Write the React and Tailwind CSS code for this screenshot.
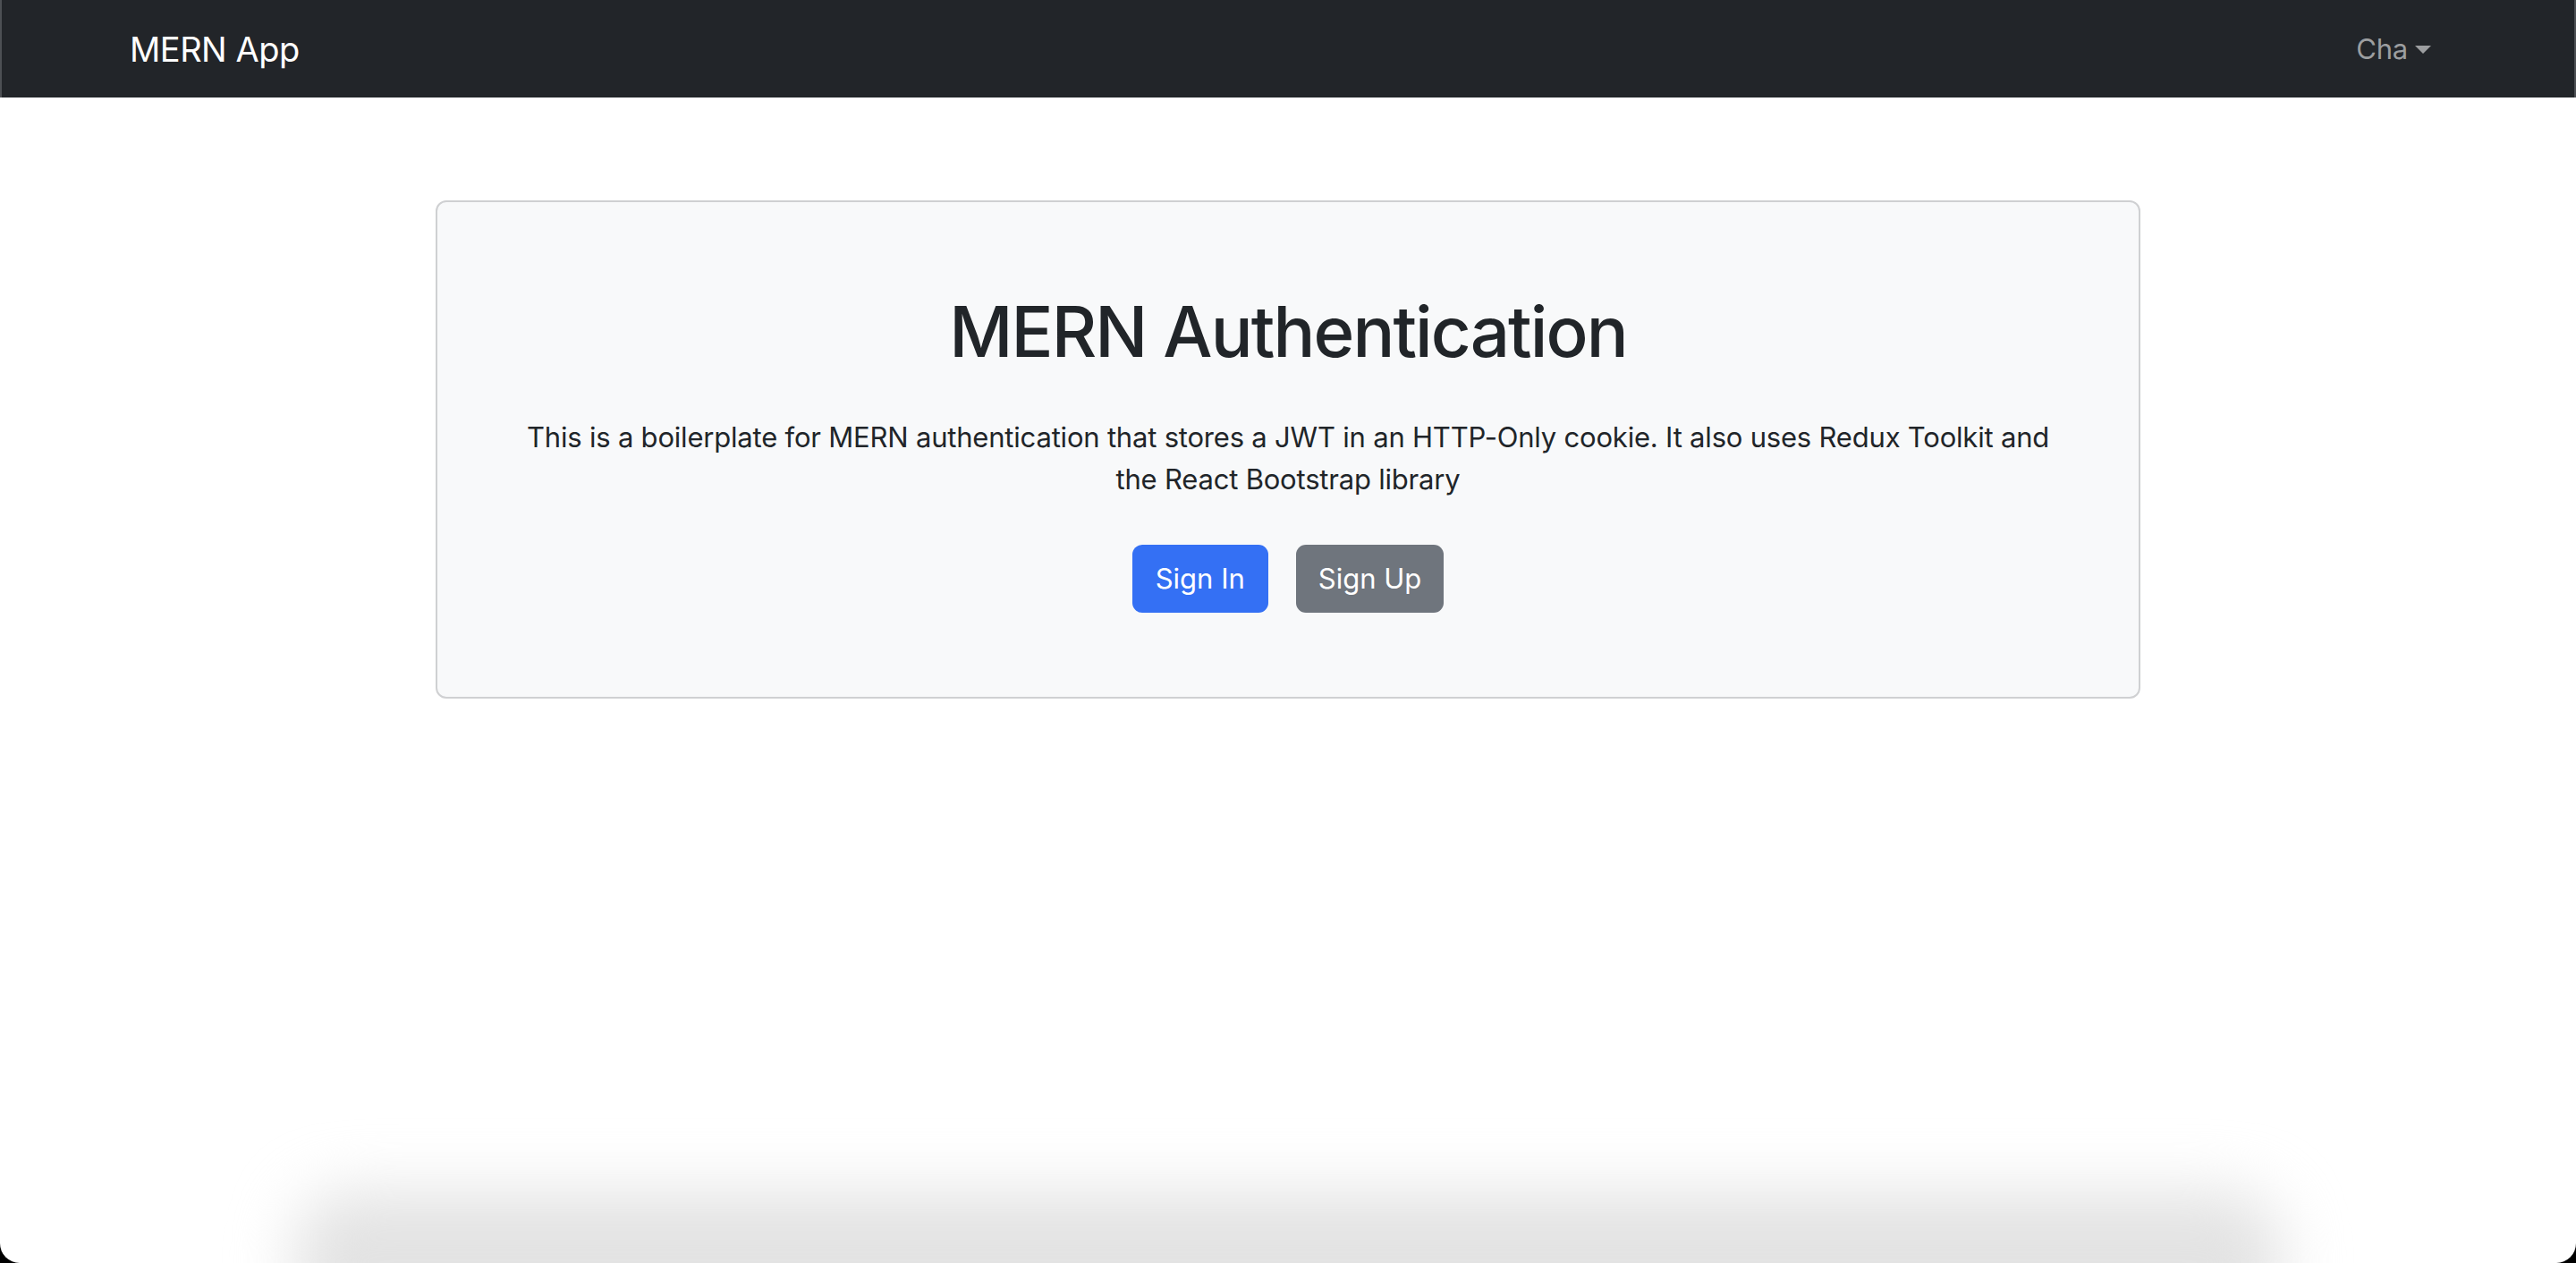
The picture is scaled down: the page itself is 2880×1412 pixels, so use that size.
export default function App() {
  return (
    <div className="h-[1412px] bg-black font-['Inter','Liberation_Sans',sans-serif] text-[#212529]">
      <div className="relative h-[1412px] overflow-hidden rounded-b-[22px] bg-white">
        {/* Navbar */}
        <nav className="flex h-[109px] items-center justify-between border-x-2 border-[#4d5054] bg-[#222529] pl-[143px] pr-[160px]">
          <span className="text-[38px] leading-none tracking-[-0.5px] text-white">MERN App</span>
          <button className="flex items-center text-[31px] leading-none tracking-[-0.2px] text-[#9c9ea0]">
            Cha
            <span className="ml-[8px] mt-[2px] h-0 w-0 border-x-[9px] border-t-[9px] border-x-transparent border-t-[#9c9ea0]" />
          </button>
        </nav>

        {/* Hero */}
        <main className="flex justify-center pt-[115px]">
          <div className="flex h-[557px] w-[1906px] flex-col items-center rounded-[12px] border-2 border-[#cfd0d2] bg-[#f8f9fa] px-[92px] pt-[98px]">
            <h1 className="text-[78px] font-medium leading-[94px] tracking-[-1.9px]">MERN Authentication</h1>
            <p className="mt-[47px] text-center text-[31px] leading-[47px] tracking-[-0.2px]">
              This is a boilerplate for MERN authentication that stores a JWT in an HTTP-Only cookie. It also uses
              Redux Toolkit and the React Bootstrap library
            </p>
            <div className="mt-[50px] flex gap-[31px]">
              <button className="h-[76px] rounded-[11px] bg-[#3470f4] px-[26px] text-[31px] text-white">
                Sign In
              </button>
              <button className="h-[76px] rounded-[11px] bg-[#6f757d] px-[25px] text-[31px] text-white">
                Sign Up
              </button>
            </div>
          </div>
        </main>

        {/* shadow of the window beneath */}
        <div className="absolute bottom-[-80px] left-[330px] right-[330px] h-[160px] rounded-[60px] bg-[#e3e3e3] blur-[34px]" />
      </div>
    </div>
  )
}
